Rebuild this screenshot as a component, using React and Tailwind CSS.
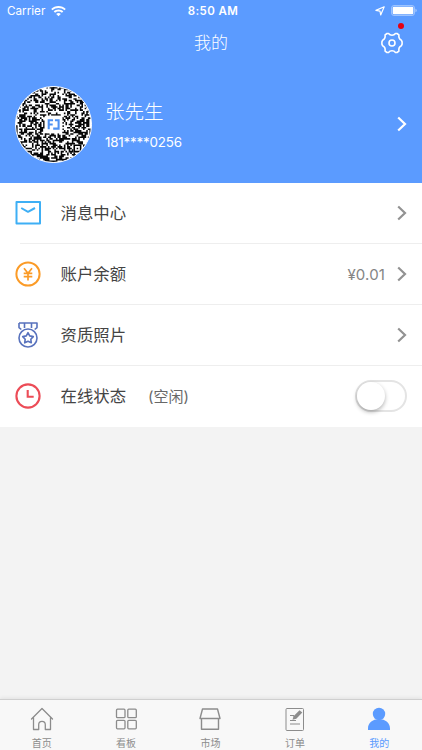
import React from "react";

const FONT = "font-[Inter,'Noto_Sans_CJK_SC',sans-serif]";
const QR_SIZE = 47;

function buildQr() {
  let seed = 90217;
  const next = () => {
    seed = (seed * 1103515245 + 12345) % 2147483648;
    return seed / 2147483648;
  };
  let d = "";
  for (let y = 0; y < QR_SIZE; y++) {
    for (let x = 0; x < QR_SIZE; x++) {
      const dark = next() > 0.47;
      const inLogo = x > 17 && x < 29 && y > 17 && y < 29;
      const inMarker = x > 35 && x < 41 && y > 35 && y < 41;
      if (dark && !inLogo && !inMarker) d += `M${x} ${y}h1v1h-1z`;
    }
  }
  return d;
}

const QR_PATH = buildQr();

function QrAvatar() {
  return (
    <div className="size-[77px] shrink-0 overflow-hidden rounded-full border border-white bg-white">
      <svg viewBox="0 0 47 47" className="size-full">
        <path d={QR_PATH} fill="#080808" />
        <path d="M36 36h5v5h-5z" fill="#000" />
        <path d="M37 37h3v3h-3z" fill="#fff" />
        <path d="M38 38h1v1h-1z" fill="#000" />
        <rect x="18" y="18" width="11" height="11" rx="1.5" fill="#fff" />
        <path d="M23.200 20.800h-2.700v5.600M20.500 23.500h2.500M24.400 20.800h2.300v5.300h-3.400" fill="none" stroke="#4e91f2" strokeWidth="1.300" />
      </svg>
    </div>
  );
}

function Chevron({ className }) {
  return (
    <svg viewBox="0 0 10 16" className={`h-4 w-2.5 shrink-0 ${className}`} fill="none" stroke="currentColor" strokeWidth="2.2">
      <path d="M1.200 1.500 8 8l-6.800 6.500" />
    </svg>
  );
}

function StatusBar() {
  return (
    <div className="grid h-[22px] grid-cols-3 items-center pl-[7px] pr-[5px] text-white">
      <div className="flex items-center gap-[6px]">
        <span className="text-[11.700px] leading-[22px]">Carrier</span>
        <svg viewBox="0 0 15 11" className="h-[11px] w-[15px]" fill="currentColor">
          <path d="M7.500 0C4.700 0 2.100 1.100.2 2.900l1.400 1.400C3.100 2.800 5.200 2 7.500 2s4.400.8 5.900 2.300l1.400-1.400C12.900 1.100 10.300 0 7.500 0Z" />
          <path d="M7.500 3.500c-1.800 0-3.500.7-4.800 1.900L4.100 6.800c.9-.8 2.100-1.300 3.400-1.300s2.500.5 3.400 1.300l1.400-1.400C11 4.200 9.300 3.500 7.500 3.500Z" />
          <path d="M7.500 7c-.9 0-1.700.3-2.300.9l2.300 2.300 2.300-2.300C9.200 7.300 8.400 7 7.500 7Z" />
        </svg>
      </div>
      <span className="pt-px pl-[2px] text-center text-[11.500px] leading-[21px] font-semibold tracking-[0.400px]">8:50 AM</span>
      <div className="flex items-center justify-end gap-[6px] pb-px">
        <svg viewBox="0 0 10 10" className="size-[10px]" fill="none" stroke="currentColor" strokeWidth="1.200" strokeLinejoin="round">
          <path d="M9.200.8 5.700 9 5 5.100.9 4.400Z" />
        </svg>
        <svg viewBox="0 0 26 11" className="h-[11px] w-[26px]">
          <rect x=".5" y=".5" width="23" height="10" rx="2.500" fill="none" stroke="#fff" strokeOpacity=".4" />
          <rect x="1.700" y="1.700" width="20.600" height="7.600" rx="1.200" fill="#fff" />
          <path d="M24.500 3.700c1.600.7 1.600 2.900 0 3.600Z" fill="#fff" fillOpacity=".5" />
        </svg>
      </div>
    </div>
  );
}

function GearIcon() {
  return (
    <svg viewBox="0 0 22 22" className="size-[22px]" fill="none" stroke="#fff" strokeWidth="1.600" strokeLinejoin="round">
      <path d="M6 1.500h1.500c.9 1.200 2 1.700 3.500 1.700s2.600-.5 3.500-1.700H16l1.900 1.400c-.4 3 .3 4.400 2.500 5.300l.7 1.700v2.200l-.7 1.700c-2.200.9-2.900 2.300-2.500 5.300L16 20.500h-1.500c-.9-1.200-2-1.700-3.500-1.700s-2.600.5-3.500 1.700H6l-1.900-1.400c.4-3-.3-4.400-2.500-5.300l-.7-1.700V9.900l.7-1.700c2.200-.9 2.900-2.300 2.500-5.300Z" />
      <circle cx="11" cy="11" r="3" />
    </svg>
  );
}

function MailIcon() {
  return (
    <svg viewBox="0 0 26 26" className="size-[26px]" fill="none" stroke="#3eaff5" strokeWidth="2" strokeLinejoin="round">
      <rect x="1.500" y="2" width="23.500" height="21.500" />
      <path d="m6.200 8 6.800 3.800L20 8" />
    </svg>
  );
}

function YuanIcon() {
  return (
    <svg viewBox="0 0 26 26" className="size-[26px]" fill="none" stroke="#fb9b27" strokeWidth="2">
      <circle cx="13" cy="13" r="11.600" />
      <path d="m9 7.300 4 5 4-5M13 12v7.500M8.700 12.300h8.600M8.700 15.700h8.600" strokeWidth="1.700" />
    </svg>
  );
}

function MedalIcon() {
  return (
    <svg viewBox="0 0 26 26" className="size-[26px]" fill="none" stroke="#5872bd" strokeWidth="1.600" strokeLinejoin="round">
      <path d="M4 1h18v4.600L19.700 7.500M4 1v4.600L6.300 7.500M9.500 1v5M16.500 1v5" />
      <circle cx="13" cy="16" r="9" />
      <path d="m13 10.700 1.700 3.200 3.600.7-2.500 2.600.5 3.600-3.300-1.600-3.300 1.600.5-3.600-2.500-2.600 3.600-.7Z" />
    </svg>
  );
}

function ClockIcon() {
  return (
    <svg viewBox="0 0 26 26" className="size-[26px]" fill="none" stroke="#ec4c57" strokeWidth="2.100">
      <circle cx="13" cy="13" r="11.600" />
      <path d="M12.700 7v6.800h6" />
    </svg>
  );
}

function Row({ icon, label, note, children }) {
  return (
    <div className="flex h-[61px] shrink-0 items-center pb-px pl-[15px]">
      <div className="flex w-[45.500px] shrink-0">{icon}</div>
      <span className="text-[16.400px] leading-6 text-[#444]">{label}</span>
      {note && <span className="ml-[22px] pt-px text-[15px] leading-6 text-[#686868]">{note}</span>}
      <div className="ml-auto flex items-center pr-[15px]">{children}</div>
    </div>
  );
}

function Divider() {
  return <div className="-mt-px ml-5 h-px shrink-0 bg-[#eeeeee]" />;
}

function HomeIcon() {
  return (
    <svg viewBox="0 0 24 24" className="size-6" fill="none" stroke="currentColor" strokeWidth="1.300" strokeLinejoin="round" strokeLinecap="round">
      <path d="M1.500 12 12 1.500 22.500 12M3.500 10.500v12h5.200v-4.800a3.300 3.300 0 0 1 6.600 0v4.800h5.200v-12" />
    </svg>
  );
}

function BoardIcon() {
  return (
    <svg viewBox="0 0 24 24" className="size-6" fill="none" stroke="currentColor" strokeWidth="1.300">
      <rect x="2.500" y="2.200" width="8.500" height="8.500" rx="1" />
      <rect x="13.800" y="2.200" width="8.500" height="8.500" rx="1" />
      <rect x="2.500" y="13.300" width="8.500" height="8.500" rx="1" />
      <rect x="13.800" y="13.300" width="8.500" height="8.500" rx="1" />
    </svg>
  );
}

function MarketIcon() {
  return (
    <svg viewBox="0 0 24 24" className="size-6" fill="none" stroke="currentColor" strokeWidth="1.400" strokeLinejoin="round">
      <path d="M4.500 2h15L22 11.500H2ZM3.500 11.500v10.800h17V11.500" />
    </svg>
  );
}

function OrderIcon() {
  return (
    <svg viewBox="0 0 24 24" className="size-6" fill="none" stroke="currentColor" strokeWidth="1">
      <rect x="3" y="1.500" width="17.500" height="22" rx="1" />
      <path d="M7 8.500h4M7 13.500h6M7 17h10" strokeWidth="1.200" />
      <path d="m9.500 12.700 1-3.500 6-6 2.800 2.400-6 6.200Z" fill="currentColor" stroke="none" />
    </svg>
  );
}

function PersonIcon() {
  return (
    <svg viewBox="0 0 24 24" className="size-6" fill="currentColor">
      <circle cx="12" cy="7" r="6.200" />
      <path d="M1 23v-1.600C1 16.300 5 13 9 12.500l3 .5 3-.5c4 .5 8 3.800 8 8.900V23Z" />
    </svg>
  );
}

const TABS = [
  { label: "首页", Icon: HomeIcon },
  { label: "看板", Icon: BoardIcon },
  { label: "市场", Icon: MarketIcon },
  { label: "订单", Icon: OrderIcon },
  { label: "我的", Icon: PersonIcon, active: true },
];

export default function App() {
  return (
    <div className={`flex h-[750px] w-[422px] flex-col overflow-hidden bg-[#f3f3f3] ${FONT}`}>
      <header className="h-[182.500px] shrink-0 bg-[#5b9bff] text-white">
        <StatusBar />
        <div className="grid h-[42px] grid-cols-3 items-center">
          <h1 className="col-start-2 text-center text-[17px] leading-6 font-light">我的</h1>
          <div className="relative mr-[19px] justify-self-end">
            <GearIcon />
            <span className="absolute -top-[9px] -right-[1px] size-[6px] rounded-full bg-[#e60012]" />
          </div>
        </div>
        <div className="flex items-center pt-[21.500px] pr-[15px] pl-[15px]">
          <QrAvatar />
          <div className="ml-[13px] flex flex-col">
            <span className="pt-px text-[19.500px] leading-7 font-light">张先生</span>
            <span className="mt-[6px] text-[13.400px] leading-5 tracking-[-0.200px]">181****0256</span>
          </div>
          <Chevron className="mb-px ml-auto text-white" />
        </div>
      </header>
      <main className="flex h-[244.500px] shrink-0 flex-col bg-white pt-[0.500px]">
        <Row icon={<MailIcon />} label="消息中心">
          <Chevron className="text-[#929292]" />
        </Row>
        <Divider />
        <Row icon={<YuanIcon />} label="账户余额">
          <span className="mr-[12px] pt-px text-[15px] leading-6 tracking-[0.150px] text-[#858585]">¥0.01</span>
          <Chevron className="text-[#929292]" />
        </Row>
        <Divider />
        <Row icon={<MedalIcon />} label="资质照片">
          <Chevron className="text-[#929292]" />
        </Row>
        <Divider />
        <Row icon={<ClockIcon />} label="在线状态" note="(空闲)">
          <div className="flex h-8 w-[52px] items-center rounded-full border-2 border-[#e4e4e4] bg-white">
            <div className="size-7 rounded-full bg-white shadow-[0_2px_4px_rgba(0,0,0,0.3)]" />
          </div>
        </Row>
      </main>
      <nav className="mt-auto grid h-[51px] shrink-0 grid-cols-5 border-t border-[#cfcfcf] bg-[#f8f8f8] shadow-[0_-1px_4px_rgba(0,0,0,0.08)]">
        {TABS.map(({ label, Icon, active }) => (
          <div key={label} className={`flex flex-col items-center pt-[7px] pr-px ${active ? "text-[#5b9bff]" : "text-[#8c8c8c]"}`}>
            <Icon />
            <span className="mt-[5px] text-[10px] leading-[14px]">{label}</span>
          </div>
        ))}
      </nav>
    </div>
  );
}
